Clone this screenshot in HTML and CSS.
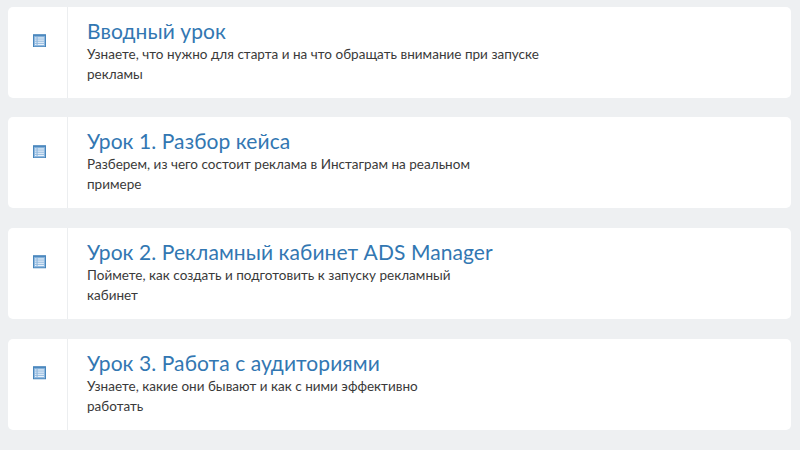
FILE: index.html
```html
<!DOCTYPE html>
<html lang="ru">
<head>
<meta charset="utf-8">
<title>Уроки</title>
<link rel="stylesheet" href="styles.css">
</head>
<body>
<main class="list">
  <article class="card">
    <div class="card-icon"><svg class="icon" viewBox="0 0 14 14"><rect x="0.5" y="0.5" width="13" height="13" fill="#8fb8df" stroke="#3f7fb8"/><path d="M1 1.5h12" stroke="#3f7fb8"/><path d="M2.2 4h1.6M5 4h6.8M2.2 6.3h1.6M5 6.3h6.8M2.2 8.6h1.6M5 8.6h6.8M2.2 10.9h1.6M5 10.9h6.8" stroke="#fff" fill="none"/></svg></div>
    <div class="card-body">
      <h2 class="title">Вводный урок</h2>
      <p class="desc">Узнаете, что нужно для старта и на что обращать внимание при запуске<br>рекламы</p>
    </div>
  </article>
  <article class="card">
    <div class="card-icon"><svg class="icon" viewBox="0 0 14 14"><rect x="0.5" y="0.5" width="13" height="13" fill="#8fb8df" stroke="#3f7fb8"/><path d="M1 1.5h12" stroke="#3f7fb8"/><path d="M2.2 4h1.6M5 4h6.8M2.2 6.3h1.6M5 6.3h6.8M2.2 8.6h1.6M5 8.6h6.8M2.2 10.9h1.6M5 10.9h6.8" stroke="#fff" fill="none"/></svg></div>
    <div class="card-body">
      <h2 class="title">Урок 1. Разбор кейса</h2>
      <p class="desc">Разберем, из чего состоит реклама в Инстаграм на реальном<br>примере</p>
    </div>
  </article>
  <article class="card">
    <div class="card-icon"><svg class="icon" viewBox="0 0 14 14"><rect x="0.5" y="0.5" width="13" height="13" fill="#8fb8df" stroke="#3f7fb8"/><path d="M1 1.5h12" stroke="#3f7fb8"/><path d="M2.2 4h1.6M5 4h6.8M2.2 6.3h1.6M5 6.3h6.8M2.2 8.6h1.6M5 8.6h6.8M2.2 10.9h1.6M5 10.9h6.8" stroke="#fff" fill="none"/></svg></div>
    <div class="card-body">
      <h2 class="title">Урок 2. Рекламный кабинет ADS Manager</h2>
      <p class="desc">Поймете, как создать и подготовить к запуску рекламный<br>кабинет</p>
    </div>
  </article>
  <article class="card">
    <div class="card-icon"><svg class="icon" viewBox="0 0 14 14"><rect x="0.5" y="0.5" width="13" height="13" fill="#8fb8df" stroke="#3f7fb8"/><path d="M1 1.5h12" stroke="#3f7fb8"/><path d="M2.2 4h1.6M5 4h6.8M2.2 6.3h1.6M5 6.3h6.8M2.2 8.6h1.6M5 8.6h6.8M2.2 10.9h1.6M5 10.9h6.8" stroke="#fff" fill="none"/></svg></div>
    <div class="card-body">
      <h2 class="title">Урок 3. Работа с аудиториями</h2>
      <p class="desc">Узнаете, какие они бывают и как с ними эффективно<br>работать</p>
    </div>
  </article>
</main>
</body>
</html>
```

FILE: styles.css
```css
html, body {
  margin: 0;
  height: 450px;
  overflow: hidden;
  background: #eef0f2;
}
.list {
  display: flex;
  flex-direction: column;
  gap: 19.7px;
  padding: 6.6px 9px 0 8px;
  font-family: Lato, "Open Sans", sans-serif;
}
.card {
  display: flex;
  height: 91px;
  background: #fff;
  border-radius: 5px;
}
.card-icon {
  width: 60px;
  flex: none;
  box-sizing: border-box;
  border-right: 1px solid #eceef0;
  padding: 27.4px 0 0 24.5px;
}
.icon {
  display: block;
  width: 13px;
  height: 13.5px;
}
.card-body {
  padding: 11px 0 0 19px;
}
.title {
  margin: 0;
  font-size: 21px;
  line-height: 26px;
  font-weight: 400;
  letter-spacing: 0.08px;
  color: #3277b2;
}
.desc {
  margin: 0;
  font-size: 13.5px;
  line-height: 20px;
  letter-spacing: 0.02px;
  color: #3a3a3a;
}
```
